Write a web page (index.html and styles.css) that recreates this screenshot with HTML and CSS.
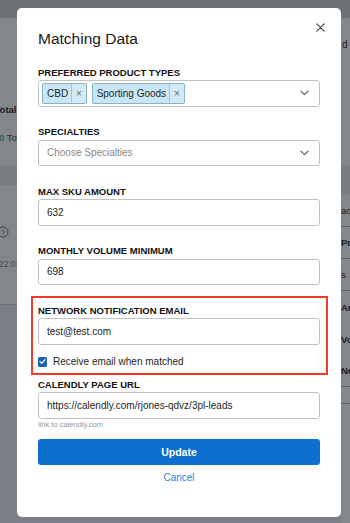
FILE: index.html
```html
<!DOCTYPE html>
<html lang="en">
<head>
<meta charset="utf-8">
<title>Matching Data</title>
<link rel="stylesheet" href="styles.css">
</head>
<body>
<div class="page">
  <div class="topbar"></div>
  <div class="content">
    <aside class="left-strip">
      <div class="l-top">
        <div class="l-total">Total Leads</div>
        <div class="l-sub"><span class="green">0</span> Total</div>
      </div>
      <div class="l-band"></div>
      <div class="l-mid">
        <svg class="l-help" width="12" height="12" viewBox="0 0 12 12"><circle cx="6" cy="6" r="5" fill="none" stroke="#3e4146" stroke-width="0.9"/><text x="6" y="8.6" font-size="7.5" text-anchor="middle" fill="#3e4146" font-family="Liberation Sans, Arial, sans-serif">?</text></svg>
        <div class="l-time">22:03</div>
      </div>
      <div class="l-bottom"></div>
    </aside>
    <aside class="right-strip">
      <div class="r-head">d</div>
      <div class="r-band"></div>
      <div class="r-row r-line">ac</div>
      <div class="r-row r-line bold">Pr</div>
      <div class="r-row r-line">s</div>
      <div class="r-row bold">An</div>
      <div class="r-row bold">Vol</div>
      <div class="r-row r-line bold">No</div>
      <div class="r-row r-line short"></div>
    </aside>
  </div>
</div>

<div class="backdrop">
  <div class="modal">
    <button class="close" type="button" aria-label="Close">
      <svg width="9" height="9" viewBox="0 0 9 9"><path d="M0.8 0.8 L8.2 8.2 M8.2 0.8 L0.8 8.2" stroke="#444" stroke-width="1.2" stroke-linecap="round"/></svg>
    </button>
    <h1 class="title">Matching Data</h1>

    <div class="field">
      <div class="label">PREFERRED PRODUCT TYPES</div>
      <div class="control select tags">
        <span class="tag"><span class="tag-text">CBD</span><span class="tag-x">×</span></span>
        <span class="tag"><span class="tag-text">Sporting Goods</span><span class="tag-x">×</span></span>
        <svg class="chev" width="9" height="6" viewBox="0 0 9 6"><path d="M1 1.2 L4.5 4.6 L8 1.2" fill="none" stroke="#666" stroke-width="1.2" stroke-linecap="round" stroke-linejoin="round"/></svg>
      </div>
    </div>

    <div class="field">
      <div class="label">SPECIALTIES</div>
      <div class="control select">
        <span class="placeholder">Choose Specialties</span>
        <svg class="chev" width="9" height="6" viewBox="0 0 9 6"><path d="M1 1.2 L4.5 4.6 L8 1.2" fill="none" stroke="#666" stroke-width="1.2" stroke-linecap="round" stroke-linejoin="round"/></svg>
      </div>
    </div>

    <div class="field">
      <div class="label">MAX SKU AMOUNT</div>
      <div class="control">632</div>
    </div>

    <div class="field">
      <div class="label">MONTHLY VOLUME MINIMUM</div>
      <div class="control">698</div>
    </div>

    <div class="field notify">
      <div class="label">NETWORK NOTIFICATION EMAIL</div>
      <div class="control">test@test.com</div>
      <label class="check-row">
        <span class="checkbox"><svg width="9" height="9" viewBox="0 0 9 9"><path d="M2 4.6 L3.8 6.3 L7 2.6" fill="none" stroke="#fff" stroke-width="1.3" stroke-linecap="round" stroke-linejoin="round"/></svg></span>
        <span>Receive email when matched</span>
      </label>
    </div>

    <div class="field last">
      <div class="label">CALENDLY PAGE URL</div>
      <div class="control">https://calendly.com/rjones-qdvz/3pl-leads</div>
      <div class="hint">link to calendly.com</div>
    </div>

    <button class="update" type="button">Update</button>
    <div class="cancel">Cancel</div>
  </div>
</div>
</body>
</html>
```

FILE: styles.css
```css
* { box-sizing: border-box; }

body {
  margin: 0;
  width: 350px;
  height: 523px;
  overflow: hidden;
  font-family: "Liberation Sans", Arial, Helvetica, sans-serif;
  background: #7c7f85;
  color: #1c1d1f;
}

/* dimmed page behind the modal */
.page {
  height: 523px;
  display: flex;
  flex-direction: column;
}
.topbar {
  height: 18px;
  flex: none;
  background: #6d7075;
}
.content {
  flex: 1;
  display: flex;
  justify-content: space-between;
}
.left-strip {
  width: 17px;
  overflow: hidden;
  display: flex;
  flex-direction: column;
}
.l-top {
  height: 147px;
  background: #83868b;
  padding-top: 86px;
}
.l-total {
  margin-left: -5.5px;
  white-space: nowrap;
  font-size: 9.5px;
  font-weight: 700;
  line-height: 12px;
  color: #1c1d1f;
}
.l-sub {
  margin-left: -1px;
  margin-top: 16px;
  white-space: nowrap;
  font-size: 9.5px;
  line-height: 12px;
  color: #2a2b2e;
}
.green { color: #2c6a48; font-weight: 700; }
.l-band {
  height: 20px;
  background: #797c81;
}
.l-mid {
  height: 120px;
  background: #83868b;
  border-bottom: 1px solid #6e7176;
  padding-top: 41px;
}
.l-help {
  display: block;
  margin-left: -3px;
}
.l-time {
  margin-top: 21px;
  margin-left: -1px;
  white-space: nowrap;
  font-size: 8.5px;
  line-height: 10px;
  color: #4a4d52;
}
.l-bottom {
  flex: 1;
  background: #7b7e84;
}

.right-strip {
  width: 9px;
  overflow: hidden;
  display: flex;
  flex-direction: column;
  background: #83868b;
}
.r-head {
  height: 147px;
  padding-top: 20px;
  padding-left: 1px;
  font-size: 10px;
  line-height: 14px;
  color: #1c1d1f;
}
.r-band {
  height: 30px;
  background: #797c81;
}
.r-row {
  height: 32px;
  display: flex;
  align-items: center;
  white-space: nowrap;
  font-size: 9.5px;
  color: #1c1d1f;
}
.r-row.bold { font-weight: 700; }
.r-line { border-bottom: 1px solid #5f6267; }
.r-row.short { height: 17px; }

/* modal */
.backdrop {
  position: fixed;
  inset: 0;
  padding: 8px 9px 6px 17px;
  display: flex;
}
.modal {
  position: relative;
  flex: 1;
  background: #fff;
  border-radius: 5px;
  padding: 21px 21px 0 21px;
  display: flex;
  flex-direction: column;
}
.close {
  position: absolute;
  top: 14px;
  right: 16px;
  width: 10px;
  height: 10px;
  padding: 0;
  border: 0;
  background: transparent;
  display: flex;
  align-items: center;
  justify-content: center;
}
.title {
  margin: 0 0 17.8px 0;
  font-size: 15.5px;
  line-height: 20px;
  font-weight: 400;
  color: #1a1a1a;
}

.field {
  display: flex;
  flex-direction: column;
  margin-bottom: 19.7px;
}
.label {
  font-size: 9.5px;
  font-weight: 700;
  line-height: 12px;
  margin-bottom: 1.3px;
  color: #111;
  white-space: nowrap;
}
.control {
  height: 26.5px;
  border: 1px solid #c2c2c2;
  border-radius: 3px;
  padding: 0 8px;
  display: flex;
  align-items: center;
  font-size: 10px;
  color: #1e1e1e;
  white-space: nowrap;
}
.select { justify-content: flex-start; gap: 5px; }
.select .chev { margin-left: auto; margin-right: 2px; }
.tags { padding: 0 8px 0 3px; }
.placeholder { color: #888; }

.tag {
  display: inline-flex;
  align-items: stretch;
  height: 20.5px;
  border: 1px solid #86b4cb;
  border-radius: 2px;
  background: #c9e6f4;
  font-size: 10px;
  color: #1f2a30;
}
.tag-text {
  display: flex;
  align-items: center;
  padding: 0 3px 0 4px;
}
.tag-x {
  width: 14.5px;
  display: flex;
  align-items: center;
  justify-content: center;
  border-left: 1px solid #a3c7d8;
  border-radius: 0 2px 2px 0;
  background: #d2eaf6;
  font-size: 10px;
  color: #5a6a72;
}

.notify {
  position: relative;
  margin-bottom: 10px;
}
.notify::after {
  content: "";
  position: absolute;
  top: -9px;
  bottom: -6px;
  left: -7.5px;
  right: -7.5px;
  border: 2px solid #f03a2c;
  pointer-events: none;
}
.check-row {
  display: flex;
  align-items: center;
  gap: 6px;
  height: 14px;
  margin-top: 10.4px;
  font-size: 10px;
  color: #1e1e1e;
}
.checkbox {
  width: 9.5px;
  height: 9.5px;
  margin-left: -0.5px;
  border-radius: 1.5px;
  background: #1d5fb6;
  display: flex;
}

.field.last { margin-bottom: 0; }
.hint {
  margin-top: 1.7px;
  font-size: 7.5px;
  line-height: 10px;
  color: #9a9a9a;
}

.update {
  margin-top: 8.6px;
  height: 26.4px;
  width: 100%;
  border: 0;
  border-radius: 3px;
  background: #0b70cf;
  color: #fff;
  font-family: inherit;
  font-size: 10.5px;
  font-weight: 700;
}
.cancel {
  margin-top: 5.8px;
  text-align: center;
  font-size: 10px;
  line-height: 14px;
  color: #2d7fd8;
}
```
